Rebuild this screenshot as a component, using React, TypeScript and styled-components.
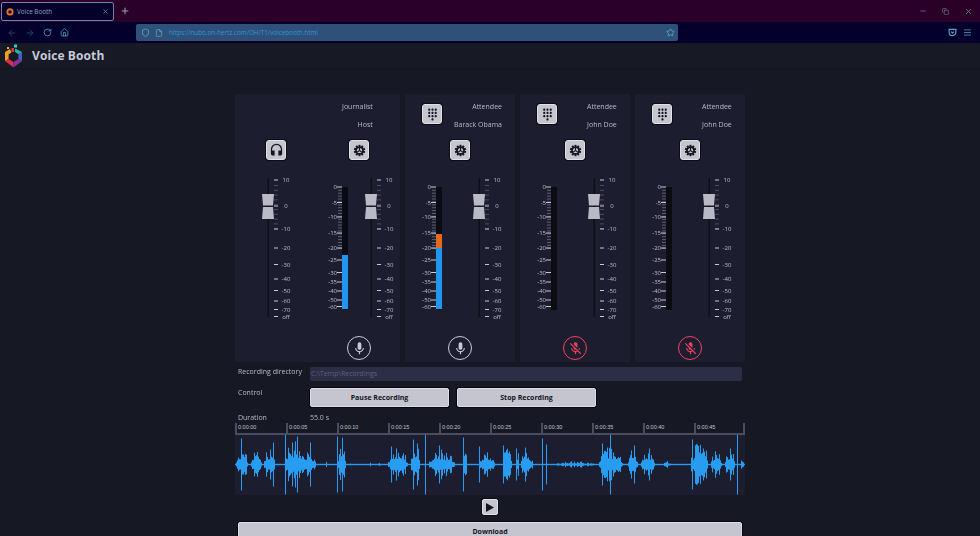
import React from "react";
import styled, { createGlobalStyle } from "styled-components";
import {
  ArrowLeft,
  ArrowRight,
  Copy,
  File,
  Home,
  Menu,
  Minus,
  Plus,
  RotateCw,
  Shield,
  Star,
  X,
} from "lucide-react";
import { MdDialpad, MdHeadset, MdMic, MdMicOff } from "react-icons/md";

const Colors = {
  Page: "#161824",
  Panel: "#1c1e30",
  Label: "#b8bac8",
  Button: "#c5c5cf",
  Blue: "#279cf0",
  Meter: "#2196ee",
  Orange: "#e4691d",
  Red: "#f5405f",
};

const UiFont = `"Open Sans", "Noto Sans", sans-serif`;

const Global = createGlobalStyle`
  html, body {
    margin: 0;
    padding: 0;
    background: ${Colors.Page};
    overflow: hidden;
  }
  * { box-sizing: border-box; }
`;

const Screen = styled.div`
  width: 980px;
  height: 536px;
  overflow: hidden;
  background: ${Colors.Page};
  font-family: ${UiFont};
  color: ${Colors.Label};
`;

/* browser chrome */
const TabBar = styled.div`
  height: 22px;
  background: #2a0028;
  display: flex;
  align-items: center;
  padding: 0 0 0 1px;
`;
const Tab = styled.div`
  width: 113px;
  height: 19px;
  margin-top: 1px;
  background: #03012b;
  border: 1px solid #6b86a8;
  border-radius: 2px;
  display: flex;
  align-items: center;
  padding: 0 4px 0 4px;
  gap: 3px;
  font-size: 6.3px;
  color: #8fa6bf;
`;
const TabTitle = styled.span`
  flex: 1;
`;
const NewTab = styled.div`
  display: flex;
  margin-left: 6px;
  color: #a9c0d8;
`;
const WindowButtons = styled.div`
  margin-left: auto;
  display: flex;
  align-items: center;
  gap: 15px;
  padding-right: 7px;
  color: #76899f;
`;
const NavBar = styled.div`
  height: 21px;
  background: #03012b;
  display: flex;
  align-items: center;
  padding: 0 8px 0 7px;
`;
const NavIcons = styled.div`
  width: 129px;
  display: flex;
  align-items: center;
  gap: 8px;
`;
const NavIcon = styled.span<{ $dim?: boolean }>`
  display: flex;
  color: ${(p) => (p.$dim ? "#2c4a6c" : "#58a6cf")};
`;
const UrlBar = styled.div`
  width: 542px;
  height: 17px;
  background: #2e5079;
  border-radius: 2px;
  display: flex;
  align-items: center;
  gap: 5px;
  padding: 0 3px 0 5px;
  color: #62b3d8;
`;
const UrlText = styled.span`
  flex: 1;
  margin-left: 1px;
  font-size: 6.3px;
  color: #2f95d6;
`;
const NavRight = styled.div`
  margin-left: auto;
  display: flex;
  align-items: center;
  gap: 6px;
  color: #58a6cf;
`;

/* app header */
const AppHeader = styled.header`
  height: 26px;
  background: #171a25;
  border-bottom: 1px solid #13151f;
  display: flex;
  align-items: center;
  gap: 8px;
  padding: 0 0 0 4px;
`;
const AppTitle = styled.h1`
  margin: 0;
  font-size: 12px;
  font-weight: 700;
  letter-spacing: 0.1px;
  color: #c6c9d8;
`;

/* mixer */
const Main = styled.main`
  width: 510px;
  margin: 25px 0 0 235px;
  display: flex;
  flex-direction: column;
`;
const Channels = styled.div`
  display: flex;
  gap: 5px;
`;
const Channel = styled.section`
  height: 268px;
  background: ${Colors.Panel};
  display: flex;
`;
const MonitorColumn = styled.div`
  width: 83px;
  padding: 46px 0 0 27px;
  display: flex;
  flex-direction: column;
`;
const Strip = styled.div<{ $wide?: boolean }>`
  width: ${(p) => (p.$wide ? "110px" : "82px")};
  display: flex;
  flex-direction: column;
  align-items: center;
`;
const StripHeader = styled.div<{ $right: number }>`
  width: 100%;
  height: 46px;
  display: flex;
  justify-content: space-between;
  padding: 4px ${(p) => p.$right}px 0 17px;
`;
const Names = styled.div`
  margin-left: auto;
  text-align: right;
  font-size: 7px;
  line-height: 18px;
  color: ${Colors.Label};
  will-change: transform;
`;
const IconButton = styled.button<{ $offset?: number }>`
  width: 20px;
  height: 20px;
  padding: 0;
  margin-left: ${(p) => p.$offset ?? 0}px;
  flex: none;
  background: ${Colors.Button};
  border: 1px solid #e0e0e8;
  border-radius: 3px;
  box-shadow: 0 0 0 1px #0b0c14;
  color: #14151f;
  display: flex;
  align-items: center;
  justify-content: center;
`;
const DialButton = styled(IconButton)`
  margin-top: 6px;
`;
const MixerRow = styled.div<{ $gap: number; $inset: number }>`
  width: 100%;
  height: 146px;
  margin-top: 16px;
  display: flex;
  gap: ${(p) => p.$gap}px;
  padding-left: ${(p) => p.$inset}px;
`;
const MonitorFader = styled.div`
  margin-top: 16px;
`;
const MicButton = styled.div<{ $muted?: boolean }>`
  width: 24px;
  height: 24px;
  margin-top: 14px;
  border-radius: 50%;
  border: 1.5px solid ${(p) => (p.$muted ? Colors.Red : "#c9cad6")};
  color: ${(p) => (p.$muted ? Colors.Red : "#c9cad6")};
  display: flex;
  align-items: center;
  justify-content: center;
`;
const ScaleSvg = styled.svg`
  display: block;
  will-change: transform;
`;
const ScaleText = styled.text`
  font-family: ${UiFont};
  font-size: 6px;
  fill: #bcbecb;
`;

/* form rows */
const FormRow = styled.div<{ $top: number; $height: number }>`
  display: flex;
  padding: 0 3px;
  margin-top: ${(p) => p.$top}px;
  height: ${(p) => p.$height}px;
`;
const FieldLabel = styled.span`
  width: 72px;
  font-size: 7px;
  line-height: 10px;
  flex: none;
  will-change: transform;
`;
const PathInput = styled.div`
  flex: 1;
  height: 14px;
  background: #2c2e48;
  border-radius: 2px;
  padding-left: 1px;
  font-size: 7px;
  line-height: 14px;
  color: #5d6078;
`;
const Buttons = styled.div`
  display: flex;
  gap: 8px;
`;
const ActionButton = styled.button`
  width: 139px;
  height: 19px;
  padding: 0;
  background: ${Colors.Button};
  border: 1px solid #dcdce4;
  border-radius: 2px;
  box-shadow: 0 0 0 1px #07080f;
  font-family: ${UiFont};
  font-size: 7px;
  font-weight: 700;
  color: #14151f;
`;
const DurationValue = styled.span`
  font-size: 7px;
  line-height: 10px;
  will-change: transform;
`;

/* timeline */
const Ruler = styled.div`
  height: 12px;
  margin-top: -1px;
  display: flex;
  border-bottom: 2px solid #4a4c60;
  border-right: 2px solid #4a4c60;
`;
const RulerCell = styled.div`
  width: 51px;
  flex: none;
  border-left: 2px solid #4a4c60;
  padding-left: 1px;
  font-family: "Liberation Sans", sans-serif;
  font-size: 5.5px;
  line-height: 9px;
  color: #c2c4d0;
`;
const Wave = styled.svg`
  display: block;
  background: ${Colors.Panel};
`;
const PlayRow = styled.div`
  display: flex;
  justify-content: center;
  margin-top: 4px;
`;
const PlayButton = styled(IconButton)`
  width: 16px;
  height: 16px;
  border-radius: 2px;
`;
const DownloadButton = styled(ActionButton)`
  width: 504px;
  margin: 7px 0 0 3px;
  flex: none;
`;

const FaderMarks: [string, number][] = [
  ["10", 180],
  ["0", 206],
  ["-10", 229],
  ["-20", 248],
  ["-30", 264.5],
  ["-40", 279],
  ["-50", 290.5],
  ["-60", 301],
  ["-70", 309.5],
  ["off", 316.5],
];
const MeterMarks: [string, number][] = [
  ["0", 187],
  ["-5", 202.5],
  ["-10", 217],
  ["-15", 233],
  ["-20", 248],
  ["-25", 260],
  ["-30", 272.5],
  ["-35", 282],
  ["-40", 291],
  ["-50", 300],
  ["-60", 306.5],
];
const SvgTop = 176;

function Fader() {
  const minor: number[] = [];
  for (let y = 185; y < 229; y += 4.8) minor.push(y);
  return (
    <ScaleSvg width="32" height="146" viewBox={`0 ${SvgTop} 32 146`}>
      <rect x="5.5" y="178" width="1.5" height="139" fill="#0d0e16" />
      {minor.map((y) => (
        <rect key={y} x="12" y={y} width="4" height="1" fill="#4b4d5f" />
      ))}
      {FaderMarks.map(([label, y]) => (
        <g key={label}>
          <rect x="12" y={y - 0.5} width="4" height="1" fill="#c6c8d4" />
          <ScaleText x="24" y={y + 2.2} textAnchor="middle">
            {label}
          </ScaleText>
        </g>
      ))}
      <polygon points="0,194 12,194 11,205.4 1,205.4" fill="#b9bac6" />
      <polygon points="1,207 11,207 12,219 0,219" fill="#b9bac6" />
    </ScaleSvg>
  );
}

function Meter({ blue = 0, orange = 0 }: { blue?: number; orange?: number }) {
  const minor: number[] = [];
  for (let y = 189.8; y < 248; y += 2.9) minor.push(y);
  return (
    <ScaleSvg width="30" height="146" viewBox={`0 ${SvgTop} 30 146`}>
      {minor.map((y) => (
        <rect key={y} x="20" y={y} width="4" height="1" fill="#5c5e70" />
      ))}
      <rect x="24" y="187" width="6" height="123" fill="#0b0c13" />
      {blue > 0 && (
        <rect x="24" y={blue} width="6" height={309 - blue} fill={Colors.Meter} />
      )}
      {orange > 0 && (
        <rect x="24" y={orange} width="6" height={blue - orange} fill={Colors.Orange} />
      )}
      {MeterMarks.map(([label, y]) => (
        <g key={label}>
          <rect x="19" y={y - 0.5} width="5" height="1" fill="#c6c8d4" />
          <ScaleText x="19" y={y + 2.2} textAnchor="end">
            {label}
          </ScaleText>
        </g>
      ))}
    </ScaleSvg>
  );
}

function GearIcon() {
  const teeth = Array.from({ length: 10 }, (_, i) => i * 36);
  return (
    <svg width="13" height="13" viewBox="0 0 16 16">
      {teeth.map((a) => (
        <rect key={a} x="6.8" y="1" width="2.4" height="3" fill="#14151f" transform={`rotate(${a} 8 8)`} />
      ))}
      <circle cx="8" cy="8" r="5.2" fill="#14151f" />
      <circle cx="8" cy="8" r="3.2" fill="#c5c5cf" />
      <path d="M8 8 L8 4.8 M8 8 L5.2 9.8 M8 8 L10.8 9.8" stroke="#14151f" strokeWidth="1.3" />
    </svg>
  );
}

function PocketIcon() {
  return (
    <svg width="9" height="9" viewBox="0 0 16 16" fill="none" stroke="currentColor" strokeWidth="2">
      <path d="M2 2.5h12v5a6 6 0 0 1-12 0z" />
      <path d="M5.5 6.5 8 9l2.5-2.5" />
    </svg>
  );
}

function Logo() {
  return (
    <svg width="20" height="24" viewBox="0 0 20 24">
      <polygon points="1,8 6,5 7.5,8.5 4.6,10.2 4.6,15 1,17" fill="#f0a020" />
      <polygon points="1,17 4.6,15 9.5,18 9.5,23.5" fill="#d8304c" />
      <polygon points="9.5,18 14.4,15 18,17 9.5,23.5" fill="#8a2f9c" />
      <polygon points="14.4,15 14.4,10 18,8 18,17" fill="#3f63c4" />
      <polygon points="11,4.5 18,8 14.4,10 11,8" fill="#2bb4a8" />
      <rect x="10" y="0.5" width="3" height="3" fill="#38c8c0" />
      <rect x="3" y="3" width="2" height="2" fill="#f5b52a" />
      <rect x="7.5" y="4" width="2.4" height="4" fill="#e23a46" />
    </svg>
  );
}

/* waveform: bursts are [start, end, amplitude], spikes are [x, amplitude] */
const Bursts: [number, number, number][] = [
  [0, 13, 18], [15, 27, 17], [28, 40, 17], [49, 68, 24], [64, 81, 16],
  [90, 92, 4], [102, 111, 18], [114, 116, 3], [134, 136, 4], [142, 145, 3],
  [152, 173, 17], [175, 185, 23], [193, 220, 15], [228, 232, 18], [243, 260, 16],
  [267, 277, 20], [280, 284, 15], [285, 298, 15], [315, 362, 3.5], [363, 388, 19],
  [392, 403, 17], [405, 420, 17], [427, 438, 3.5], [455, 473, 25], [475, 487, 15],
  [489, 500, 17], [505, 509, 8],
];
const Spikes: [number, number][] = [
  [6, 26], [38, 22], [50, 30], [57, 22], [62, 28], [75, 22], [102, 28], [107, 27],
  [156, 18], [178, 25], [182, 21], [190, 30], [204, 19], [228, 27], [244, 18],
  [268, 19], [281, 16], [290, 17], [307, 26], [311, 20], [367, 21], [375, 30],
  [399, 19], [414, 16], [457, 25], [462, 20], [471, 14], [495, 16], [502, 30],
];

function buildWave() {
  let seed = 23;
  const rand = () => {
    seed = (seed * 16807) % 2147483647;
    return seed / 2147483647;
  };
  const mid = 29.5;
  let d = "";
  for (let x = 0; x < 510; x += 1) {
    let amp = 0.7;
    Bursts.forEach(([a, b, h]) => {
      if (x < a || x > b) return;
      const t = (x - a) / (b - a);
      const shape = Math.pow(Math.sin(Math.PI * t), 0.7);
      const r = rand();
      amp = Math.max(amp, h * shape * (0.3 + r * r * 0.7));
    });
    d += `M${x + 0.5} ${mid - amp}V${mid + amp}`;
  }
  Spikes.forEach(([x, h]) => {
    d += `M${x + 0.5} ${mid - h}V${mid + h}`;
  });
  return d;
}
const WavePath = buildWave();

const Times = ["0:00:00", "0:00:05", "0:00:10", "0:00:15", "0:00:20", "0:00:25", "0:00:30", "0:00:35", "0:00:40", "0:00:45"];

const Attendees = [
  { role: "Attendee", name: "Barack Obama", blue: 248, orange: 234, muted: false },
  { role: "Attendee", name: "John Doe", blue: 0, orange: 0, muted: true },
  { role: "Attendee", name: "John Doe", blue: 0, orange: 0, muted: true },
];

export default function App() {
  return (
    <Screen>
      <Global />
      <TabBar>
        <Tab>
          <svg width="8" height="9" viewBox="0 0 20 24">
            <circle cx="10" cy="13" r="7" fill="none" stroke="#e8742a" strokeWidth="5" />
          </svg>
          <TabTitle>Voice Booth</TabTitle>
          <X size={7} />
        </Tab>
        <NewTab>
          <Plus size={10} />
        </NewTab>
        <WindowButtons>
          <Minus size={8} />
          <Copy size={7} />
          <X size={9} />
        </WindowButtons>
      </TabBar>
      <NavBar>
        <NavIcons>
          <NavIcon $dim>
            <ArrowLeft size={10} />
          </NavIcon>
          <NavIcon $dim>
            <ArrowRight size={10} />
          </NavIcon>
          <NavIcon>
            <RotateCw size={9} />
          </NavIcon>
          <NavIcon>
            <Home size={9} />
          </NavIcon>
        </NavIcons>
        <UrlBar>
          <Shield size={9} />
          <File size={8} />
          <UrlText>https://nubo.on-hertz.com/OH/T1/voicebooth.html</UrlText>
          <Star size={9} />
        </UrlBar>
        <NavRight>
          <PocketIcon />
          <Menu size={9} />
        </NavRight>
      </NavBar>
      <AppHeader>
        <Logo />
        <AppTitle>Voice Booth</AppTitle>
      </AppHeader>
      <Main>
        <Channels>
          <Channel>
            <MonitorColumn>
              <IconButton $offset={4}>
                <MdHeadset size={15} />
              </IconButton>
              <MonitorFader>
                <Fader />
              </MonitorFader>
            </MonitorColumn>
            <Strip>
              <StripHeader $right={27}>
                <Names>
                  <div>Journalist</div>
                  <div>Host</div>
                </Names>
              </StripHeader>
              <IconButton>
                <GearIcon />
              </IconButton>
              <MixerRow $gap={17} $inset={0}>
                <Meter blue={255} />
                <Fader />
              </MixerRow>
              <MicButton>
                <MdMic size={15} />
              </MicButton>
            </Strip>
          </Channel>
          {Attendees.map((a, i) => (
            <Channel key={i}>
              <Strip $wide>
                <StripHeader $right={13}>
                  <DialButton>
                    <MdDialpad size={13} />
                  </DialButton>
                  <Names>
                    <div>{a.role}</div>
                    <div>{a.name}</div>
                  </Names>
                </StripHeader>
                <IconButton>
                  <GearIcon />
                </IconButton>
                <MixerRow $gap={31} $inset={7}>
                  <Meter blue={a.blue} orange={a.orange} />
                  <Fader />
                </MixerRow>
                <MicButton $muted={a.muted}>
                  {a.muted ? <MdMicOff size={15} /> : <MdMic size={15} />}
                </MicButton>
              </Strip>
            </Channel>
          ))}
        </Channels>
        <FormRow $top={5} $height={14}>
          <FieldLabel>Recording directory</FieldLabel>
          <PathInput>C:\Temp\Recordings</PathInput>
        </FormRow>
        <FormRow $top={7} $height={19}>
          <FieldLabel>Control</FieldLabel>
          <Buttons>
            <ActionButton>Pause Recording</ActionButton>
            <ActionButton>Stop Recording</ActionButton>
          </Buttons>
        </FormRow>
        <FormRow $top={6} $height={11}>
          <FieldLabel>Duration</FieldLabel>
          <DurationValue>55.0 s</DurationValue>
        </FormRow>
        <Ruler>
          {Times.map((t) => (
            <RulerCell key={t}>{t}</RulerCell>
          ))}
        </Ruler>
        <Wave width="510" height="60" viewBox="0 0 510 60">
          <path d={WavePath} stroke={Colors.Blue} strokeWidth="1" fill="none" />
        </Wave>
        <PlayRow>
          <PlayButton>
            <svg width="8" height="9" viewBox="0 0 9 10">
              <polygon points="0,0 9,5 0,10" fill="#14151f" />
            </svg>
          </PlayButton>
        </PlayRow>
        <DownloadButton>Download</DownloadButton>
      </Main>
    </Screen>
  );
}
